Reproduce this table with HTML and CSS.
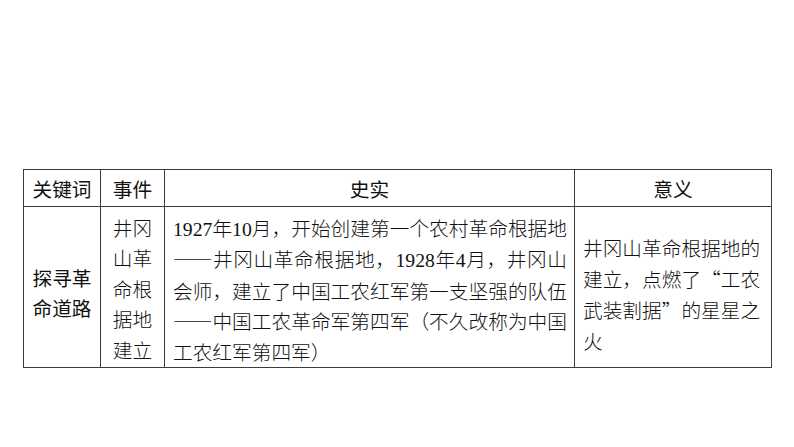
FILE: index.html
```html
<!DOCTYPE html>
<html lang="zh-CN">
<head>
<meta charset="utf-8">
<title>探寻革命道路</title>
<link rel="stylesheet" href="styles.css">
</head>
<body>
<div class="page">
  <table class="grid">
    <colgroup>
      <col class="c-key">
      <col class="c-event">
      <col class="c-fact">
      <col class="c-mean">
    </colgroup>
    <thead>
      <tr>
        <th>关键词</th>
        <th>事件</th>
        <th>史实</th>
        <th>意义</th>
      </tr>
    </thead>
    <tbody>
      <tr>
        <td class="key">探寻革命道路</td>
        <td class="event">井冈山革命根据地建立</td>
        <td class="fact"><span class="num">1927</span>年<span class="num">10</span>月，开始创建第一个农村革命根据地——井冈山革命根据地，<span class="num">1928</span>年<span class="num">4</span>月，井冈山会师，建立了中国工农红军第一支坚强的队伍——中国工农革命军第四军（不久改称为中国工农红军第四军）</td>
        <td class="mean">井冈山革命根据地的建立，点燃了“工农武装割据”的星星之火</td>
      </tr>
    </tbody>
  </table>
</div>
</body>
</html>
```

FILE: styles.css
```css
html, body {
  margin: 0;
  padding: 0;
  background: #ffffff;
}

.page {
  padding: 169px 0 0 23px;
}

.grid {
  border-collapse: collapse;
  table-layout: fixed;
  width: 748px;
  color: #111111;
  font-family: "Noto Sans CJK SC", sans-serif;
  font-size: 19.7px;
}

.c-key { width: 77px; }
.c-event { width: 64px; }
.c-fact { width: 410px; }
.c-mean { width: 197px; }

.grid th,
.grid td {
  border: 1px solid #3c3c3c;
}

.grid th {
  height: 34px;
  padding: 2px 0 0 0;
  font-weight: 400;
  line-height: 34px;
  text-align: center;
  vertical-align: middle;
}

.grid td {
  font-weight: 300;
  line-height: 30.4px;
}

.grid .key {
  font-weight: 400;
  text-align: center;
  vertical-align: middle;
  padding: 11px 4px 0 4px;
  line-height: 30px;
}

.event {
  text-align: center;
  vertical-align: top;
  padding: 6px 4px 0 4px;
}

.fact {
  text-align: justify;
  vertical-align: top;
  padding: 6px 7px 0 8px;
}

.grid .mean {
  vertical-align: middle;
  padding: 14px 8px 0 8px;
  line-height: 31px;
}

.num {
  font-family: "Liberation Serif", serif;
  font-weight: 400;
}
```
